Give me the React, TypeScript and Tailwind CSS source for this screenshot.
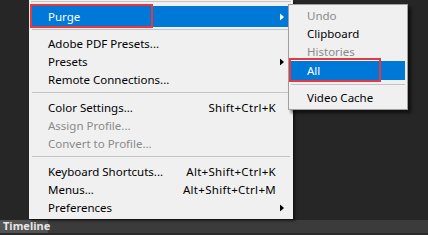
import React from "react";

type Item = {
  label: string;
  shortcut?: string;
  sub?: boolean;
  disabled?: boolean;
};

const groups: Item[][] = [
  [
    { label: "Adobe PDF Presets..." },
    { label: "Presets", sub: true },
    { label: "Remote Connections..." },
  ],
  [
    { label: "Color Settings...", shortcut: "Shift+Ctrl+K" },
    { label: "Assign Profile...", disabled: true },
    { label: "Convert to Profile...", disabled: true },
  ],
  [
    { label: "Keyboard Shortcuts...", shortcut: "Alt+Shift+Ctrl+K" },
    { label: "Menus...", shortcut: "Alt+Shift+Ctrl+M" },
    { label: "Preferences", sub: true },
  ],
];

function Arrow({ white }: { white?: boolean }) {
  return (
    <svg width="4" height="7" viewBox="0 0 4 7" className="absolute right-[7px] top-1/2 -translate-y-1/2">
      <path d="M0 0 L4 3.5 L0 7 Z" fill={white ? "#ffffff" : "#000000"} />
    </svg>
  );
}

function Row({ item }: { item: Item }) {
  return (
    <div
      className={
        "relative flex h-[18px] items-center pl-[17px] pr-[15px] " +
        (item.disabled ? "text-[#8a8a8a]" : "text-black")
      }
    >
      <span className="flex-1">{item.label}</span>
      {item.shortcut && <span className="tracking-[0.3px]">{item.shortcut}</span>}
      {item.sub && <Arrow />}
    </div>
  );
}

function Sep({ top, bottom }: { top: number; bottom: number }) {
  return (
    <div
      className="mx-[1px] h-[1px] bg-[#c4c4c4]"
      style={{ marginTop: top, marginBottom: bottom }}
    />
  );
}

export default function App() {
  return (
    <div
      className="flex h-[235px] w-[428px] flex-col overflow-hidden bg-[#262626] text-[11.5px]"
      style={{ fontFamily: '"Noto Sans", "Segoe UI", Arial, sans-serif' }}
    >
      <div className="relative flex-1">
        {/* main menu */}
        <div className="absolute left-[29px] top-0 w-[264px] bg-[#f0f0f0] px-[2px] pt-[1px] shadow-[2px_2px_2px_rgba(0,0,0,0.5)]">
          <div className="h-[1px] bg-[#c4c4c4]" />
          <div className="relative mt-[4px] flex h-[21px] items-center bg-[#0078d7] pl-[17px] text-white">
            <span>Purge</span>
            <Arrow white />
            <div className="absolute -left-[1px] -top-[2px] h-[24px] w-[123px] border-2 border-[#e8383d]" />
          </div>
          <Sep top={2} bottom={5} />
          {groups[0].map((it) => (
            <Row key={it.label} item={it} />
          ))}
          <Sep top={3} bottom={6} />
          {groups[1].map((it) => (
            <Row key={it.label} item={it} />
          ))}
          <Sep top={3} bottom={6} />
          {groups[2].map((it) => (
            <Row key={it.label} item={it} />
          ))}
          <div className="h-[2px]" />
        </div>

        {/* submenu */}
        <div className="absolute left-[288px] top-[4px] w-[120px] border border-[#a0a0a0] bg-[#f0f0f0] px-[2px] pb-[2px] pt-[2px] shadow-[3px_3px_3px_rgba(0,0,0,0.6)]">
          <div className="flex h-[18px] items-center pl-[16px] text-[#8a8a8a]">Undo</div>
          <div className="flex h-[18px] items-center pl-[16px] text-black">Clipboard</div>
          <div className="flex h-[18px] items-center pl-[16px] text-[#8a8a8a]">Histories</div>
          <div className="relative flex h-[19px] items-center bg-[#0078d7] pl-[16px] text-white">
            <span>All</span>
            <div className="absolute -left-[2px] -top-[3px] h-[24px] w-[92px] border-2 border-[#e8383d]" />
          </div>
          <div className="mb-[4px] mt-[4px] h-[1px] bg-[#c4c4c4]" />
          <div className="flex h-[18px] items-center pl-[16px] text-black">Video Cache</div>
        </div>
      </div>

      {/* timeline bar */}
      <div className="flex h-[15px] items-stretch border-b-2 border-[#2a2a2a] bg-[#3b3b3b]">
        <div className="flex w-[48px] items-center bg-[#535353] pl-[3px] text-[11px] font-bold text-[#e6e6e6]">
          Timeline
        </div>
      </div>
    </div>
  );
}
